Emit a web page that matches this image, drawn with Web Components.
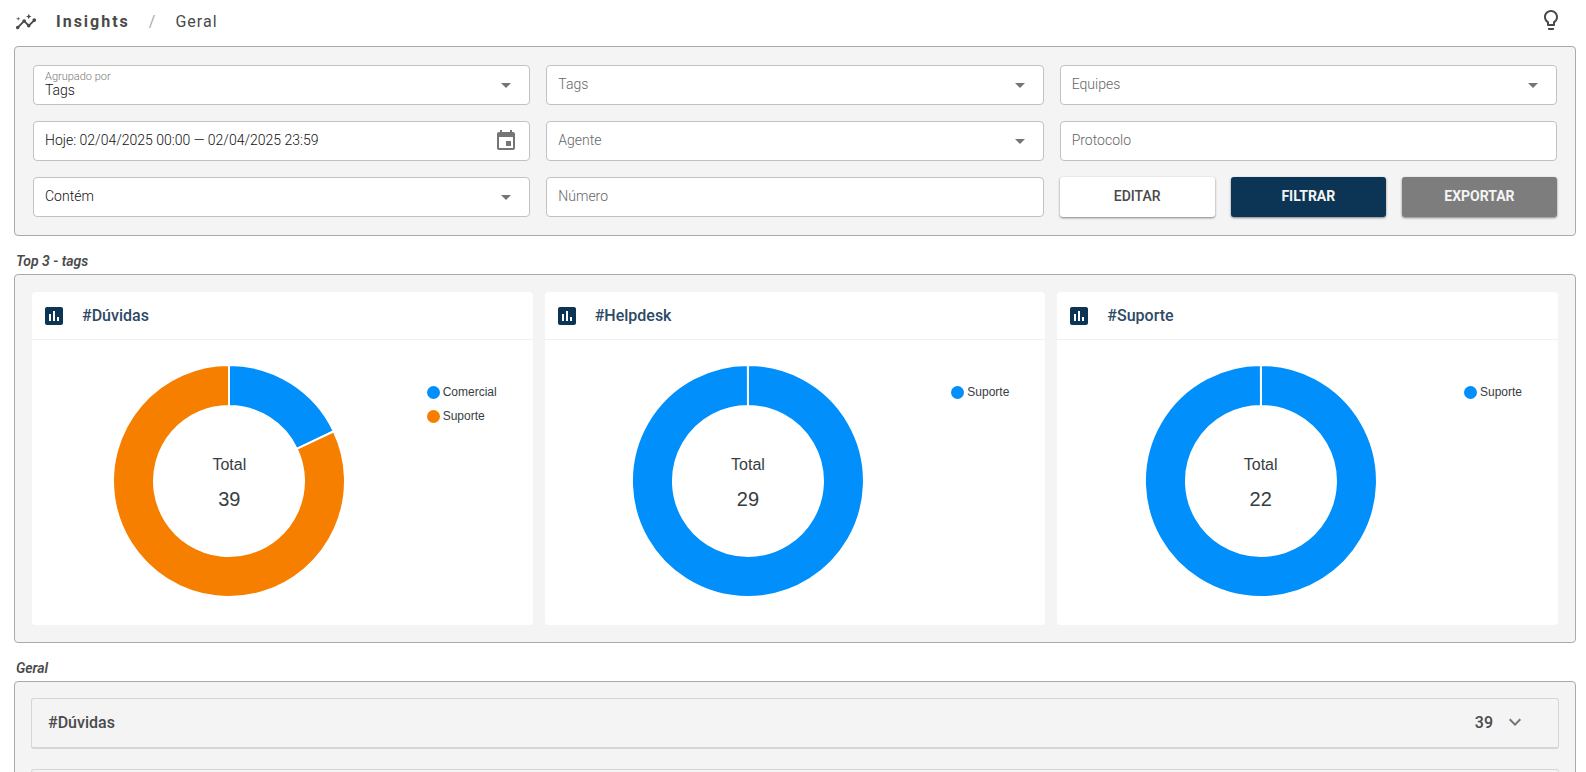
<!DOCTYPE html>
<html lang="pt-BR">
<head>
<meta charset="utf-8">
<meta name="viewport" content="width=device-width, initial-scale=1">
<title>Insights</title>
<style>
    body {
        margin: 0;
        font-family: Roboto, "Liberation Sans", sans-serif;
        font-size: 14px;
        color: #4a4a4a;
        background-color: #fff;
        --primary: #0c3454;
        --panel: #f4f4f4;
        --panel-border: #aaa;
        --field-border: #c2c2c2;
        --icon: #757575;
    }
</style>
</head>
<body>
<insights-page>
    <page-header slot="header">
        <span slot="section">Insights</span>
        <span slot="page">Geral</span>
    </page-header>

    <page-panel columns="3">
        <select-field label="Agrupado por" value="Tags"></select-field>
        <select-field label="Tags"></select-field>
        <select-field label="Equipes"></select-field>
        <text-field name="Período" value="Hoje: 02/04/2025 00:00 — 02/04/2025 23:59" icon="event"></text-field>
        <select-field label="Agente"></select-field>
        <text-field label="Protocolo"></text-field>
        <select-field name="Condição" value="Contém"></select-field>
        <text-field label="Número"></text-field>
        <button-group>
            <action-button>EDITAR</action-button>
            <action-button kind="primary">FILTRAR</action-button>
            <action-button kind="neutral">EXPORTAR</action-button>
        </button-group>
    </page-panel>

    <page-panel heading="Top 3 - tags" columns="3" dense>
        <chart-card label="#Dúvidas" series="Comercial:7,Suporte:32"></chart-card>
        <chart-card label="#Helpdesk" series="Suporte:29"></chart-card>
        <chart-card label="#Suporte" series="Suporte:22"></chart-card>
    </page-panel>

    <page-panel heading="Geral" list>
        <tag-row label="#Dúvidas" total="39"></tag-row>
        <tag-row></tag-row>
    </page-panel>
</insights-page>

<script>
const ICONS = {
    insights: 'M21 8c-1.45 0-2.26 1.44-1.93 2.51l-3.55 3.56c-.3-.09-.74-.09-1.04 0l-2.55-2.55C12.27 10.45 11.46 9 10 9c-1.45 0-2.27 1.44-1.93 2.52l-4.56 4.55C2.44 15.74 1 16.55 1 18c0 1.1.9 2 2 2 1.45 0 2.26-1.44 1.93-2.51l4.55-4.56c.3.09.74.09 1.04 0l2.55 2.55C12.73 16.55 13.54 18 15 18c1.45 0 2.27-1.44 1.93-2.52l3.56-3.55c1.07.33 2.51-.48 2.51-1.93 0-1.1-.9-2-2-2zM15 9l.94-2.07L18 6l-2.06-.93L15 3l-.92 2.07L12 6l2.08.93zM3.5 11L4 9l2-.5L4 8l-.5-2L3 8l-2 .5L3 9z',
    bulb: 'M9 21c0 .55.45 1 1 1h4c.55 0 1-.45 1-1v-1H9v1zm3-19C8.14 2 5 5.14 5 9c0 2.38 1.19 4.47 3 5.74V17c0 .55.45 1 1 1h6c.55 0 1-.45 1-1v-2.26c1.81-1.27 3-3.36 3-5.74 0-3.86-3.14-7-7-7zm2.85 11.1l-.85.6V16h-4v-2.3l-.85-.6C7.8 12.16 7 10.63 7 9c0-2.76 2.24-5 5-5s5 2.24 5 5c0 1.63-.8 3.16-2.15 4.1z',
    event: 'M17 12h-5v5h5v-5zM16 1v2H8V1H6v2H5c-1.11 0-1.99.9-1.99 2L3 19c0 1.1.89 2 2 2h14c1.1 0 2-.9 2-2V5c0-1.1-.9-2-2-2h-1V1h-2zm3 18H5V8h14v11z',
    arrow: 'M7 10l5 5 5-5z',
    chart: 'M19 3H5c-1.1 0-2 .9-2 2v14c0 1.1.9 2 2 2h14c1.1 0 2-.9 2-2V5c0-1.1-.9-2-2-2zM9 17H7v-7h2v7zm4 0h-2V7h2v10zm4 0h-2v-4h2v4z',
    chevron: 'M7.41 8.59 12 13.17l4.59-4.58L18 10l-6 6-6-6 1.41-1.41z'
};

const COLORS = ['#008ffb', '#f77f00'];

class BaseElement extends HTMLElement {
    constructor() {
        super();
        this.attachShadow({ mode: 'open' });
    }

    connectedCallback() {
        this.shadowRoot.innerHTML = this.render();
    }

    attr(name) {
        return this.getAttribute(name) || '';
    }
}

class MdIcon extends BaseElement {
    render() {
        return `
            <style>
                :host { display: block; flex: none; width: 24px; height: 24px; }
                svg { display: block; width: 100%; height: 100%; fill: currentColor; }
            </style>
            <svg viewBox="0 0 24 24" aria-hidden="true"><path d="${ICONS[this.attr('name')]}"/></svg>
        `;
    }
}

class InsightsPage extends BaseElement {
    render() {
        return `
            <style>
                :host {
                    display: flex;
                    flex-direction: column;
                    box-sizing: border-box;
                    height: 100vh;
                    padding: 0 10px 0 14px;
                    overflow: hidden;
                }
                main { flex: none; }
            </style>
            <slot name="header"></slot>
            <main><slot></slot></main>
        `;
    }
}

class PageHeader extends BaseElement {
    render() {
        return `
            <style>
                :host { display: block; flex: none; }
                header {
                    display: flex;
                    align-items: center;
                    justify-content: space-between;
                    height: 46px;
                    padding: 0 13px 3px 1px;
                    box-sizing: border-box;
                }
                nav { display: flex; align-items: center; gap: 19px; font-size: 16px; letter-spacing: 1px; }
                nav md-icon { width: 22px; height: 22px; }
                .section { font-weight: 700; letter-spacing: 2px; }
                .slash { color: #aaa; }
                button {
                    padding: 0 0 4px;
                    border: none;
                    background: none;
                    color: inherit;
                    cursor: pointer;
                }
            </style>
            <header>
                <nav aria-label="Navegação">
                    <md-icon name="insights"></md-icon>
                    <span class="section"><slot name="section"></slot></span>
                    <span class="slash">/</span>
                    <slot name="page"></slot>
                </nav>
                <button type="button" aria-label="Dicas"><md-icon name="bulb"></md-icon></button>
            </header>
        `;
    }
}

class PagePanel extends BaseElement {
    render() {
        const heading = this.attr('heading');
        return `
            <style>
                :host { display: block; }
                h2 {
                    margin: 0;
                    padding: 15px 0 3px 2px;
                    font-size: 14px;
                    line-height: 20px;
                    font-weight: 600;
                    font-style: italic;
                }
                .panel {
                    display: grid;
                    gap: 16px;
                    padding: 18px;
                    border: 1px solid var(--panel-border);
                    border-radius: 4px;
                    background-color: var(--panel);
                }
                :host([columns="3"]) .panel { grid-template-columns: repeat(3, minmax(0, 1fr)); }
                :host([dense]) .panel { gap: 12px; padding: 17px; }
                :host([list]) .panel { gap: 20px; padding: 16px; }
            </style>
            ${heading ? `<h2>${heading}</h2>` : ''}
            <div class="panel"><slot></slot></div>
        `;
    }
}

// Estilos comuns aos campos do filtro
const fieldStyle = `
    :host { display: block; }
    .field {
        display: grid;
        grid-template-columns: minmax(0, 1fr) 24px;
        align-items: center;
        height: 40px;
        box-sizing: border-box;
        padding: 0 11px;
        border: 1px solid var(--field-border);
        border-radius: 4px;
        background-color: #fff;
        font-weight: 300;
    }
    .field:focus-within { border-color: var(--primary); }
    label, select, input, md-icon { grid-row: 1; }
    label { grid-column: 1; color: #666; pointer-events: none; z-index: 1; line-height: 20px; padding-bottom: 2px; }
    select, input {
        grid-column: 1 / 3;
        box-sizing: border-box;
        width: 100%;
        height: 38px;
        margin: 0;
        padding: 0 24px 2px 0;
        border: none;
        outline: none;
        appearance: none;
        background: none;
        color: #111;
        font: inherit;
    }
    md-icon { grid-column: 2; color: var(--icon); pointer-events: none; }
    .filled label { align-self: start; padding: 0; font-size: 11px; line-height: 22px; color: #777; }
    .filled select { padding: 10px 24px 0 0; }
`;

class SelectField extends BaseElement {
    render() {
        const label = this.attr('label');
        const value = this.attr('value');
        const filled = label && value ? 'filled' : '';
        return `
            <style>${fieldStyle}</style>
            <div class="field ${filled}">
                ${label ? `<label for="control">${label}</label>` : ''}
                <select id="control" ${label ? '' : `aria-label="${this.attr('name')}"`}>
                    <option>${value}</option>
                </select>
                <md-icon name="arrow"></md-icon>
            </div>
        `;
    }
}

class TextField extends BaseElement {
    render() {
        const label = this.attr('label');
        const icon = this.attr('icon');
        return `
            <style>${fieldStyle}</style>
            <div class="field">
                ${label ? `<label for="control">${label}</label>` : ''}
                <input id="control" type="text" value="${this.attr('value')}" ${label ? '' : `aria-label="${this.attr('name')}"`}>
                ${icon ? `<md-icon name="${icon}"></md-icon>` : ''}
            </div>
        `;
    }

    connectedCallback() {
        super.connectedCallback();
        const input = this.shadowRoot.querySelector('input');
        const label = this.shadowRoot.querySelector('label');
        if (label) {
            input.addEventListener('input', () => label.hidden = input.value !== '');
        }
    }
}

class ButtonGroup extends BaseElement {
    render() {
        return `
            <style>
                :host { display: grid; grid-template-columns: repeat(3, minmax(0, 1fr)); gap: 16px; }
            </style>
            <slot></slot>
        `;
    }
}

class ActionButton extends BaseElement {
    render() {
        return `
            <style>
                :host { display: block; }
                button {
                    width: 100%;
                    height: 40px;
                    padding: 0 0 2px;
                    border: none;
                    border-radius: 3px;
                    background-color: #fff;
                    box-shadow: 0 1px 3px rgba(0, 0, 0, .2), 0 1px 2px rgba(0, 0, 0, .3);
                    color: #4a4a4a;
                    font: inherit;
                    font-weight: 500;
                    cursor: pointer;
                }
                :host([kind]) button { color: #f4f4f4; font-weight: 700; }
                :host([kind="primary"]) button { background-color: var(--primary); }
                :host([kind="neutral"]) button { background-color: #7d7d7d; }
            </style>
            <button type="button"><slot></slot></button>
        `;
    }
}

class DonutChart extends BaseElement {
    point(radius, angle) {
        const x = radius * Math.sin(angle);
        const y = -radius * Math.cos(angle);
        return `${x.toFixed(2)} ${y.toFixed(2)}`;
    }

    slice(start, end, color) {
        const large = end - start > Math.PI ? 1 : 0;
        return `<path fill="${color}" d="M${this.point(116, start)} A116 116 0 ${large} 1 ${this.point(116, end)}
            L${this.point(75, end)} A75 75 0 ${large} 0 ${this.point(75, start)}Z"/>`;
    }

    render() {
        const values = this.attr('values').split(',').map(Number);
        const total = values.reduce((sum, value) => sum + value, 0);
        let angle = 0;
        const slices = values.map((value, i) => {
            // Uma fatia de 360° não fecha o arco, por isso o limite
            const size = Math.min(value / total * Math.PI * 2, Math.PI * 2 - 0.001);
            const path = this.slice(angle, angle + size, COLORS[i % COLORS.length]);
            angle += size;
            return path;
        }).join('');
        return `
            <style>
                :host { display: grid; width: 234px; height: 234px; }
                svg, div { grid-area: 1 / 1; }
                svg { display: block; stroke: #fff; stroke-width: 2; }
                div {
                    display: flex;
                    flex-direction: column;
                    align-items: center;
                    justify-content: center;
                    gap: 12px;
                    padding-top: 4px;
                    color: #373d3f;
                    font-family: "Liberation Sans", Arial, sans-serif;
                }
                .name { font-size: 16px; line-height: 20px; }
                .total { font-size: 20px; line-height: 24px; }
            </style>
            <svg viewBox="-117 -117 234 234" aria-hidden="true">${slices}</svg>
            <div><span class="name">Total</span><span class="total">${total}</span></div>
        `;
    }
}

class ChartCard extends BaseElement {
    render() {
        const series = this.attr('series').split(',').map(item => item.split(':'));
        const legend = series.map(([name], i) => `<li style="--color: ${COLORS[i]}">${name}</li>`).join('');
        return `
            <style>
                :host { display: block; min-width: 0; border-radius: 4px; background-color: #fff; }
                header {
                    display: flex;
                    align-items: center;
                    gap: 16px;
                    height: 48px;
                    box-sizing: border-box;
                    padding: 0 10px;
                    border-bottom: 1px solid #f1f1f1;
                    color: var(--primary);
                }
                h3 { margin: 0; font-size: 16px; line-height: 24px; font-weight: 500; color: #2c4a66; }
                .body { display: flex; padding: 24px 36px 27px 0; }
                .chart { flex: 1; display: flex; justify-content: center; }
                ul {
                    display: flex;
                    flex-direction: column;
                    gap: 8px;
                    margin: 0;
                    padding: 20px 0 0;
                    list-style: none;
                    color: #373d3f;
                    font-family: "Liberation Sans", Arial, sans-serif;
                    font-size: 12px;
                    line-height: 16px;
                }
                li { display: flex; align-items: center; gap: 3px; }
                li::before {
                    content: "";
                    width: 13px;
                    height: 13px;
                    border-radius: 50%;
                    background-color: var(--color);
                }
            </style>
            <header><md-icon name="chart"></md-icon><h3>${this.attr('label')}</h3></header>
            <div class="body">
                <div class="chart"><donut-chart values="${series.map(item => item[1])}"></donut-chart></div>
                <ul>${legend}</ul>
            </div>
        `;
    }
}

class TagRow extends BaseElement {
    render() {
        return `
            <style>
                :host { display: block; }
                button {
                    display: flex;
                    align-items: center;
                    gap: 10px;
                    width: 100%;
                    height: 51px;
                    padding: 0 31px 2px 16px;
                    border: 1px solid #d6d6d6;
                    border-bottom-width: 2px;
                    border-radius: 3px;
                    background: none;
                    color: inherit;
                    font: inherit;
                    font-size: 16px;
                    font-weight: 500;
                    cursor: pointer;
                }
                .label { flex: 1; text-align: left; }
                md-icon { color: var(--icon); }
            </style>
            <button type="button" aria-expanded="false">
                <span class="label">${this.attr('label')}</span>
                <span>${this.attr('total')}</span>
                <md-icon name="chevron"></md-icon>
            </button>
        `;
    }
}

customElements.define('md-icon', MdIcon);
customElements.define('insights-page', InsightsPage);
customElements.define('page-header', PageHeader);
customElements.define('page-panel', PagePanel);
customElements.define('select-field', SelectField);
customElements.define('text-field', TextField);
customElements.define('button-group', ButtonGroup);
customElements.define('action-button', ActionButton);
customElements.define('donut-chart', DonutChart);
customElements.define('chart-card', ChartCard);
customElements.define('tag-row', TagRow);
</script>
</body>
</html>
